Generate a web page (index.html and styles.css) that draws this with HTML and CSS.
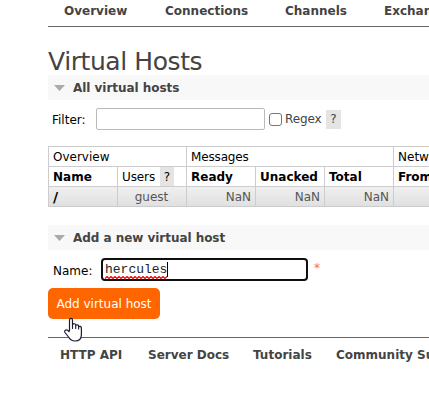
FILE: index.html
```html
<!DOCTYPE html>
<html lang="en">
<head>
<meta charset="utf-8">
<title>Virtual Hosts</title>
<link rel="stylesheet" href="styles.css">
</head>
<body>
<nav class="tabs"><a class="t1">Overview</a><a class="t2">Connections</a><a class="t3">Channels</a><a class="t4">Exchanges</a></nav>
<main>
<h1>Virtual Hosts</h1>
<h2 class="bar"><i class="arrow"></i><span class="all">All virtual hosts</span></h2>
<div class="filter">
<label class="flabel">Filter:</label><span class="field"></span><span class="check"></span><span class="regex">Regex</span><span class="help">?</span>
</div>
<table>
<colgroup><col><col><col><col><col><col><col></colgroup>
<tr><td colspan="2" class="ov">Overview</td><td colspan="3" class="ms">Messages</td><td colspan="2">Network</td></tr>
<tr><th>Name</th><td class="users"><span>Users</span><b class="help small">?</b></td><th>Ready</th><th class="un">Unacked</th><th>Total</th><th colspan="2">From client</th></tr>
<tr class="data"><th class="slash">/</th><td class="c">guest</td><td class="r">NaN</td><td class="r">NaN</td><td class="r">NaN</td><td colspan="2"></td></tr>
</table>
<h2 class="bar second"><i class="arrow"></i><span class="add">Add a new virtual host</span></h2>
<div class="name">
<label class="nlabel">Name:</label><span class="focus"><span class="typed">hercules<svg class="squiggle" width="63" height="3" viewBox="0 0 63 3"><path d="M0 2.5L2 .5L4 2.5L6 .5L8 2.5L10 .5L12 2.5L14 .5L16 2.5L18 .5L20 2.5L22 .5L24 2.5L26 .5L28 2.5L30 .5L32 2.5L34 .5L36 2.5L38 .5L40 2.5L42 .5L44 2.5L46 .5L48 2.5L50 .5L52 2.5L54 .5L56 2.5L58 .5L60 2.5L62 .5" fill="none" stroke="#e00" stroke-width="1.200"/></svg></span><i class="caret"></i></span><span class="star">*</span>
</div>
<div class="action"><button>Add virtual host</button>
<svg class="hand" width="20" height="26" viewBox="0 0 20 26"><path d="M5.500 14V3.200C5.500.8 8.500.8 8.500 3.200V8C9 6.200 11.800 6.400 11.800 8V8.700C12.200 7.300 14.600 7.500 14.600 9.200V10C15.200 8.700 17.400 9.300 17.400 11V17.500C17.400 21.500 15 24 11 24C7.500 24 6 22.500 4.500 20L1 15.500C0 13.500 2 12 3.700 13.300L5.500 15" fill="#fff" stroke="#1c1c30" stroke-width="1.200" stroke-linejoin="round"/><path d="M8.500 8V12M11.700 8.500V12M14.600 9.500V12.500" fill="none" stroke="#1c1c30" stroke-width="1.100"/></svg></div>
</main>
<footer><a class="f1">HTTP API</a><a class="f2">Server Docs</a><a class="f3">Tutorials</a><a class="f4">Community Support</a></footer>
</body>
</html>
```
FILE: styles.css
```css
* { box-sizing: border-box; }
body { margin: 0 0 0 48px; width: 381px; height: 406px; overflow: hidden; background: #fff; color: #444; font: 12px/18px "DejaVu Sans", Verdana, sans-serif; }
html { overflow: hidden; }
.tabs { display: flex; height: 27px; border-bottom: 1px solid #666; padding-left: 16px; font-weight: bold; line-height: 22px; white-space: nowrap; }
.tabs a, footer a { flex: none; }
.t1 { width: 101px; }
.t2 { width: 120px; }
.t3 { width: 99px; }
h1 { margin: 20px 0 0; height: 28px; font-size: 25px; line-height: 29px; font-weight: normal; letter-spacing: -.42px; }
.bar { display: flex; align-items: center; margin: 0; height: 25px; padding-left: 6px; background: #f8f8f8; font-size: 12px; white-space: nowrap; }
.all, .add { letter-spacing: -.04px; }
.arrow { width: 11px; height: 6px; margin: 1px 8px 0 0; background: #aaa; clip-path: polygon(0 0, 100% 0, 50% 100%); }
.filter { display: flex; align-items: center; height: 38px; padding-left: 4px; }
.flabel { width: 44px; color: #000; padding-top: 1px; }
.field { width: 169px; height: 22px; border: 1px solid #bbb; border-radius: 2px; }
.check { width: 13px; height: 13px; margin: 1px 3px 0 4px; border: 1px solid #767676; border-radius: 3px; }
.regex { width: 41px; letter-spacing: -.1px; }
.help { width: 15px; height: 19px; background: #e4e4e4; text-align: center; font-weight: normal; }
table { width: 414px; margin-top: 8px; table-layout: fixed; border-collapse: collapse; color: #000; }
col { width: 69px; }
tr { height: 20px; }
td, th { height: 20px; padding: 0 5px 0 4px; border: 1px solid #ccc; text-align: left; line-height: 18px; white-space: nowrap; overflow: hidden; }
.ms { letter-spacing: -.15px; }
.users span { display: inline-block; width: 38px; line-height: 20px; height: 19px; vertical-align: top; letter-spacing: -.1px; }
.small { display: inline-block; width: 14px; line-height: 20px; vertical-align: top; }
.data { background: linear-gradient(#f0f0f0, #dfdfdf); }
.data td { color: #555; }
.data .slash { font-size: 14px; }
.data .c { text-align: center; }
.data .r { text-align: right; padding-right: 4px; }
.second { margin-top: 18px; }
.name { display: flex; align-items: center; height: 38px; padding-left: 5px; }
.nlabel { width: 48px; color: #000; padding-top: 3px; }
.focus { display: flex; align-items: center; width: 207px; height: 23px; padding-left: 2px; border: 2px solid #101010; border-radius: 4px; color: #222; font: 13px/18px "Liberation Mono", monospace; }
.typed { position: relative; padding-top: 1px; }
.squiggle { position: absolute; left: 0; bottom: 0; }
.caret { width: 1px; height: 15px; background: #000; }
.star { margin: 0 0 3px 6px; color: #f76a5c; }
.action { position: relative; height: 49px; }
button { display: block; width: 112px; height: 31px; padding: 0; border: 0; border-radius: 5px; background: #f60; color: #fff; font: 12px "DejaVu Sans", Verdana, sans-serif; white-space: nowrap; }
.hand { position: absolute; left: 16px; top: 29px; z-index: 1; }
footer { display: flex; padding-left: 12px; border-top: 1px solid #666; height: 40px; line-height: 34px; font-weight: bold; white-space: nowrap; }
.f1 { width: 88px; }
.f2 { width: 105px; }
.f3 { width: 83px; }
```
